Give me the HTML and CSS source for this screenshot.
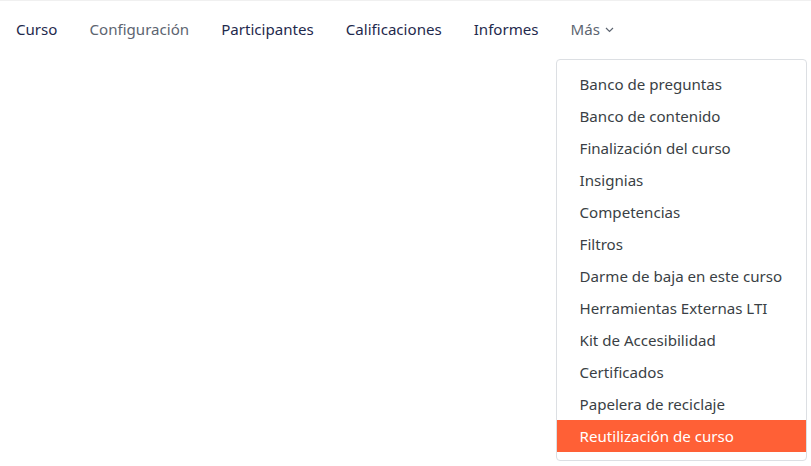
FILE: index.html
```html
<!DOCTYPE html>
<html lang="es">
<head>
  <meta charset="UTF-8" />
  <meta name="viewport" content="width=device-width, initial-scale=1.0"/>
  <title>Curso</title>
  <link rel="stylesheet" href="styles.css">
</head>
<body>
  <!-- Secondary course navigation -->
  <nav class="course-nav">
    <a class="nav-link" href="#">Curso</a>
    <a class="nav-link muted" href="#">Configuración</a>
    <a class="nav-link" href="#">Participantes</a>
    <a class="nav-link" href="#">Calificaciones</a>
    <a class="nav-link" href="#">Informes</a>

    <div class="more">
      <a class="nav-link muted" href="#">Más
        <svg class="caret" width="9" height="6" viewBox="0 0 9 6">
          <path d="M1 1 L4.5 4.5 L8 1" fill="none" stroke="currentColor" stroke-width="1.2"/>
        </svg>
      </a>

      <!-- "Más" dropdown -->
      <div class="dropdown">
        <a class="dropdown-item" href="#">Banco de preguntas</a>
        <a class="dropdown-item" href="#">Banco de contenido</a>
        <a class="dropdown-item" href="#">Finalización del curso</a>
        <a class="dropdown-item" href="#">Insignias</a>
        <a class="dropdown-item" href="#">Competencias</a>
        <a class="dropdown-item" href="#">Filtros</a>
        <a class="dropdown-item" href="#">Darme de baja en este curso</a>
        <a class="dropdown-item" href="#">Herramientas Externas LTI</a>
        <a class="dropdown-item" href="#">Kit de Accesibilidad</a>
        <a class="dropdown-item" href="#">Certificados</a>
        <a class="dropdown-item" href="#">Papelera de reciclaje</a>
        <a class="dropdown-item active" href="#">Reutilización de curso</a>
      </div>
    </div>
  </nav>
</body>
</html>
```

FILE: styles.css
```css
* {
  margin: 0;
  padding: 0;
  box-sizing: border-box;
}
html, body {
  height: 100%;
}
body {
  font-family: "Noto Sans", sans-serif;
  font-size: 15.1px;
  background: #fff;
  border-top: 1px solid #f0f0f0;
}

/* Top course navigation */
.course-nav {
  display: flex;
  align-items: center;
  margin-top: 6px;
}
.nav-link {
  display: flex;
  align-items: center;
  gap: 5px;
  padding: 11px 16px;
  line-height: 22px;
  color: #1f2a4d;
  text-decoration: none;
}
.nav-link.muted {
  color: #5d6571;
}
.caret {
  margin-top: 2px;
}

/* Dropdown under "Más" */
.more {
  position: relative;
}
.dropdown {
  position: absolute;
  z-index: 10;
  left: 1px;
  top: 52px;
  padding: 8px 0;
  background: #fff;
  border: 1px solid #dcdfe3;
  border-radius: 4px;
  white-space: nowrap;
}
.dropdown-item {
  display: block;
  padding: 5px 24px 5px 23px;
  line-height: 22px;
  color: #3a3f45;
  text-decoration: none;
}
.dropdown-item.active {
  background: #ff6036;
  color: #fff;
}
```
